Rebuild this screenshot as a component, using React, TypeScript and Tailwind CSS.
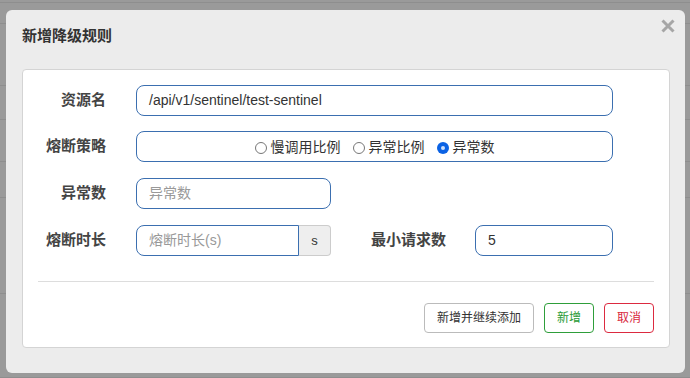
import React from 'react'

const font = { fontFamily: '"Liberation Sans", "Noto Sans CJK SC", sans-serif' }

// faint table rows behind the backdrop
const bgRows = [3, 21, 62, 34, 42, 36, 96, 84]

function Radio({ label, checked }: { label: string; checked?: boolean }) {
  return (
    <label className="flex items-center gap-[4px] text-[14px] text-[#333]">
      {checked ? (
        <span className="w-[12px] h-[12px] rounded-full bg-[#0b62e4] flex items-center justify-center">
          <span className="w-[4px] h-[4px] rounded-full bg-[#cfe0fb]" />
        </span>
      ) : (
        <span className="w-[12px] h-[12px] rounded-full border border-[#777] bg-white" />
      )}
      <span>{label}</span>
    </label>
  )
}

function Label({ text, w = 'w-[83px]' }: { text: string; w?: string }) {
  return <div className={`${w} text-right text-[15px] font-bold text-[#444] shrink-0`}>{text}</div>
}

export default function App() {
  return (
    <div className="relative w-[690px] h-[378px] overflow-hidden bg-[#9a9a9a]" style={font}>
      <div className="flex flex-col">
        {bgRows.map((h, i) => (
          <div key={i} className="border-b border-[#8e8e8e]" style={{ height: h }} />
        ))}
      </div>

      {/* modal */}
      <div className="absolute left-[6px] top-[10px] w-[679px] h-[363px] bg-[#ececec] rounded-[6px] flex flex-col">
        <div className="h-[59px] flex items-center justify-between pl-[16px] pr-[10px]">
          <div className="text-[15px] font-bold text-[#333] -mt-[6px]">新增降级规则</div>
          <svg width="14" height="14" viewBox="0 0 14 14" className="-mt-[28px]">
            <path d="M1.5 1.5 L12.5 12.5 M12.5 1.5 L1.5 12.5" stroke="#a6a6a6" strokeWidth="3" />
          </svg>
        </div>

        <div className="ml-[16px] mr-[15px] h-[279px] bg-white border border-[#d4d4d4] rounded-[4px] flex flex-col pt-[15px] px-[15px]">
          <div className="flex flex-col gap-[15px] -ml-[15px]">
            <div className="flex items-center h-[31px]">
              <Label text="资源名" />
              <div className="ml-[30px] w-[477px] h-[31px] border border-[#3b6fb0] rounded-[8px] flex items-center px-[12px] text-[14px] text-[#333]">
                /api/v1/sentinel/test-sentinel
              </div>
            </div>

            <div className="flex items-center h-[31px]">
              <Label text="熔断策略" />
              <div className="ml-[30px] w-[477px] h-[31px] border border-[#3b6fb0] rounded-[8px] flex items-center justify-center gap-[12px] pt-[2px]">
                <Radio label="慢调用比例" />
                <Radio label="异常比例" />
                <Radio label="异常数" checked />
              </div>
            </div>

            <div className="flex items-center h-[32px]">
              <Label text="异常数" />
              <div className="ml-[30px] w-[195px] h-[31px] border border-[#3b6fb0] rounded-[8px] flex items-center px-[12px] text-[14px] text-[#999]">
                异常数
              </div>
            </div>

            <div className="flex items-center h-[31px] mt-[1px]">
              <Label text="熔断时长" />
              <div className="ml-[30px] flex h-[31px]">
                <div className="w-[163px] h-full border border-[#3b6fb0] rounded-l-[8px] flex items-center px-[12px] text-[14px] text-[#999]">
                  熔断时长(s)
                </div>
                <div className="w-[32px] h-full border border-l-0 border-[#ccc] bg-[#eee] rounded-r-[4px] flex items-center justify-center text-[13px] text-[#333]">
                  s
                </div>
              </div>
              <Label text="最小请求数" w="w-[115px]" />
              <div className="ml-[29px] w-[138px] h-[31px] border border-[#3b6fb0] rounded-[8px] flex items-center px-[12px] text-[14px] text-[#333]">
                5
              </div>
            </div>
          </div>

          <div className="mt-[25px] border-t border-[#ddd]" />

          <div className="mt-[21px] flex justify-end gap-[10px]">
            <button className="h-[30px] px-[12px] border border-[#bbb] rounded-[4px] bg-white text-[12px] text-[#333]">
              新增并继续添加
            </button>
            <button className="h-[30px] px-[12px] w-[50px] border border-[#2e9e3a] rounded-[4px] bg-white text-[12px] text-[#2a9a36]">
              新增
            </button>
            <button className="h-[30px] px-[12px] w-[50px] border border-[#dc2a40] rounded-[4px] bg-white text-[12px] text-[#d8263c]">
              取消
            </button>
          </div>
        </div>
      </div>
    </div>
  )
}
